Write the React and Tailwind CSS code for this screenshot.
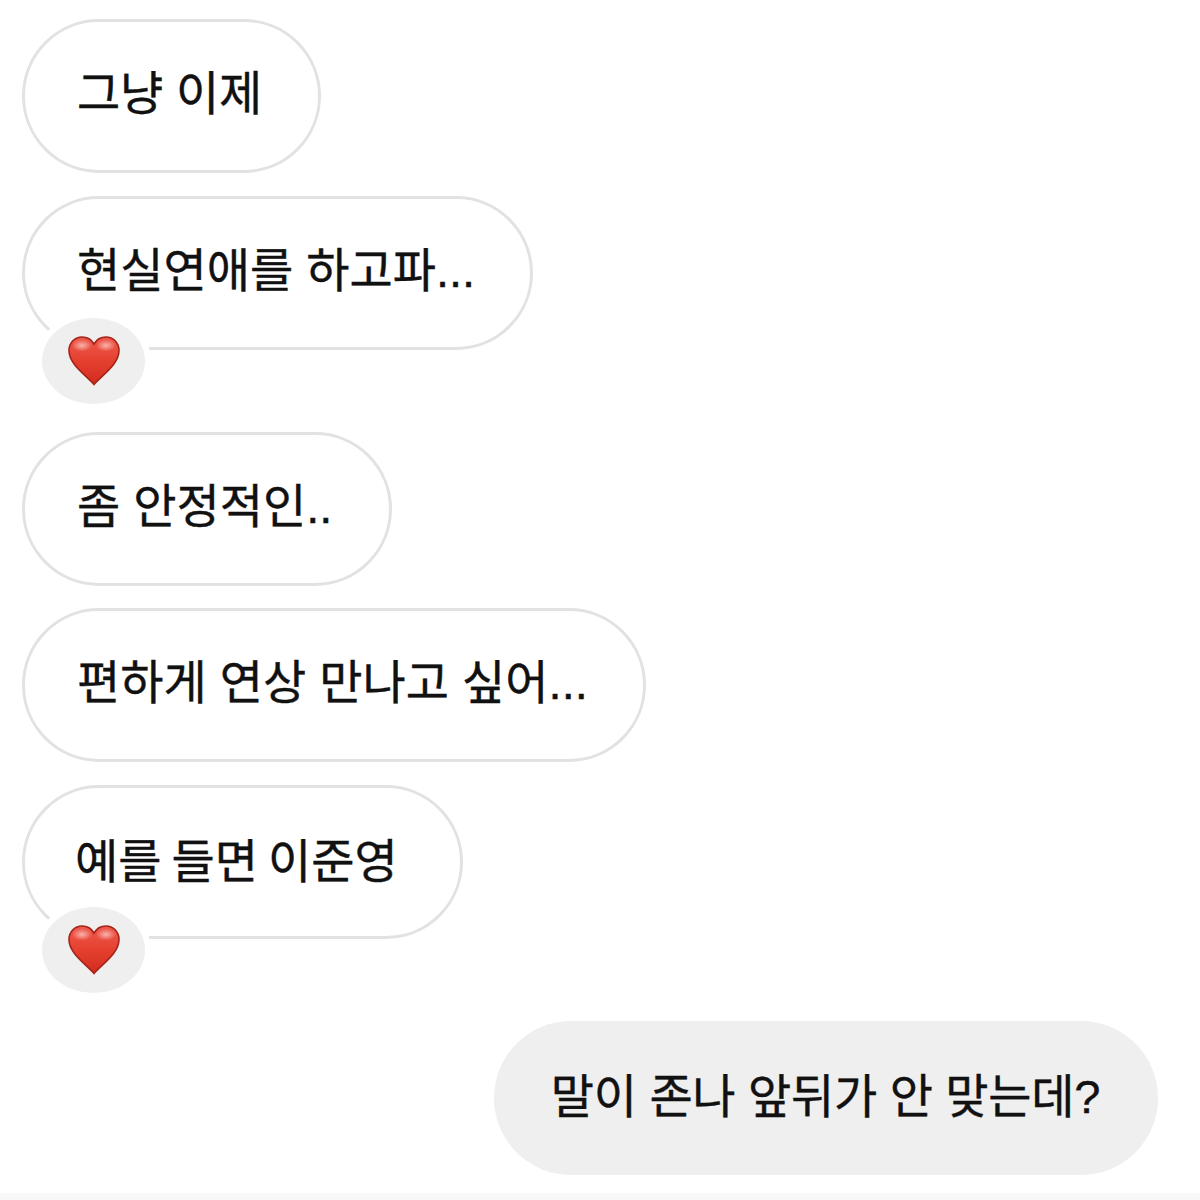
const Heart = ({ id }) => (
  <svg width="52" height="50" viewBox="0 0 52 50">
    <defs>
      <linearGradient id={`${id}Fill`} x1="0" y1="0" x2="0" y2="1">
        <stop offset="0" stopColor="#ee5a4e" />
        <stop offset="0.5" stopColor="#e5402f" />
        <stop offset="1" stopColor="#d12b1e" />
      </linearGradient>
      <radialGradient id={`${id}Shine`}>
        <stop offset="0" stopColor="#fbc4bd" stopOpacity="0.85" />
        <stop offset="1" stopColor="#fbc4bd" stopOpacity="0" />
      </radialGradient>
    </defs>
    <path
      d="M26 48.5C18 39 1 28.5 1 14.5C1 6.5 7 1 14 1C19 1 23.5 3.5 26 8C28.5 3.5 33 1 38 1C45 1 51 6.5 51 14.5C51 28.5 34 39 26 48.5Z"
      fill={`url(#${id}Fill)`}
      stroke="#a42418"
      strokeWidth="1.6"
    />
    <ellipse cx="14" cy="9.5" rx="10" ry="6" fill={`url(#${id}Shine)`} />
    <ellipse cx="38" cy="9.5" rx="10" ry="6" fill={`url(#${id}Shine)`} />
  </svg>
);

const Bubble = ({ text, reaction, mine, className, padding, textClass }) => (
  <div className={`relative flex h-[154px] w-fit items-center rounded-[77px] ${mine ? 'bg-[#efefef]' : 'border-[3px] border-[#e2e2e2] bg-white'} ${padding} ${className || ''}`}>
    <span className={`whitespace-nowrap text-[47px] leading-none text-[#111] [-webkit-text-stroke:0.4px_#111] ${textClass || 'mt-[-5px]'}`}>{text}</span>
    {reaction && (
      <div className="absolute left-[11px] top-[113px] flex h-[98px] w-[115px] items-center justify-center rounded-[50%] border-[6px] border-white bg-[#efefef]">
        <Heart id={reaction} />
      </div>
    )}
  </div>
);

export default function App() {
  return (
    <div className="flex h-[1200px] w-[1200px] flex-col overflow-hidden bg-white font-['Liberation_Sans','Noto_Sans_CJK_KR',sans-serif]">
      <div className="flex flex-1 flex-col pl-[22px] pr-[42px] pt-[19px]">
        <Bubble text="그냥 이제" padding="pl-[52px] pr-[56px]" textClass="mt-[-5px] tracking-[-0.2px]" />
        <Bubble text="현실연애를 하고파..." reaction="heartA" padding="pl-[52px] pr-[55px]" className="mt-[23px]" />
        <Bubble text="좀 안정적인.." padding="pl-[52px] pr-[57px]" className="mt-[82px]" />
        <Bubble text="편하게 연상 만나고 싶어..." padding="pl-[52px] pr-[55px]" className="mt-[22px]" />
        <Bubble text="예를 들면 이준영" reaction="heartB" padding="pl-[50px] pr-[62px]" textClass="mt-[-2px] [word-spacing:-3px]" className="mt-[23px]" />
        <Bubble text="말이 존나 앞뒤가 안 맞는데?" mine padding="pl-[57px] pr-[58px]" textClass="mt-[-4px] tracking-[-0.3px]" className="mt-[82px] self-end" />
      </div>
      <div className="h-[7px] bg-[#f8f8f8]" />
    </div>
  );
}
